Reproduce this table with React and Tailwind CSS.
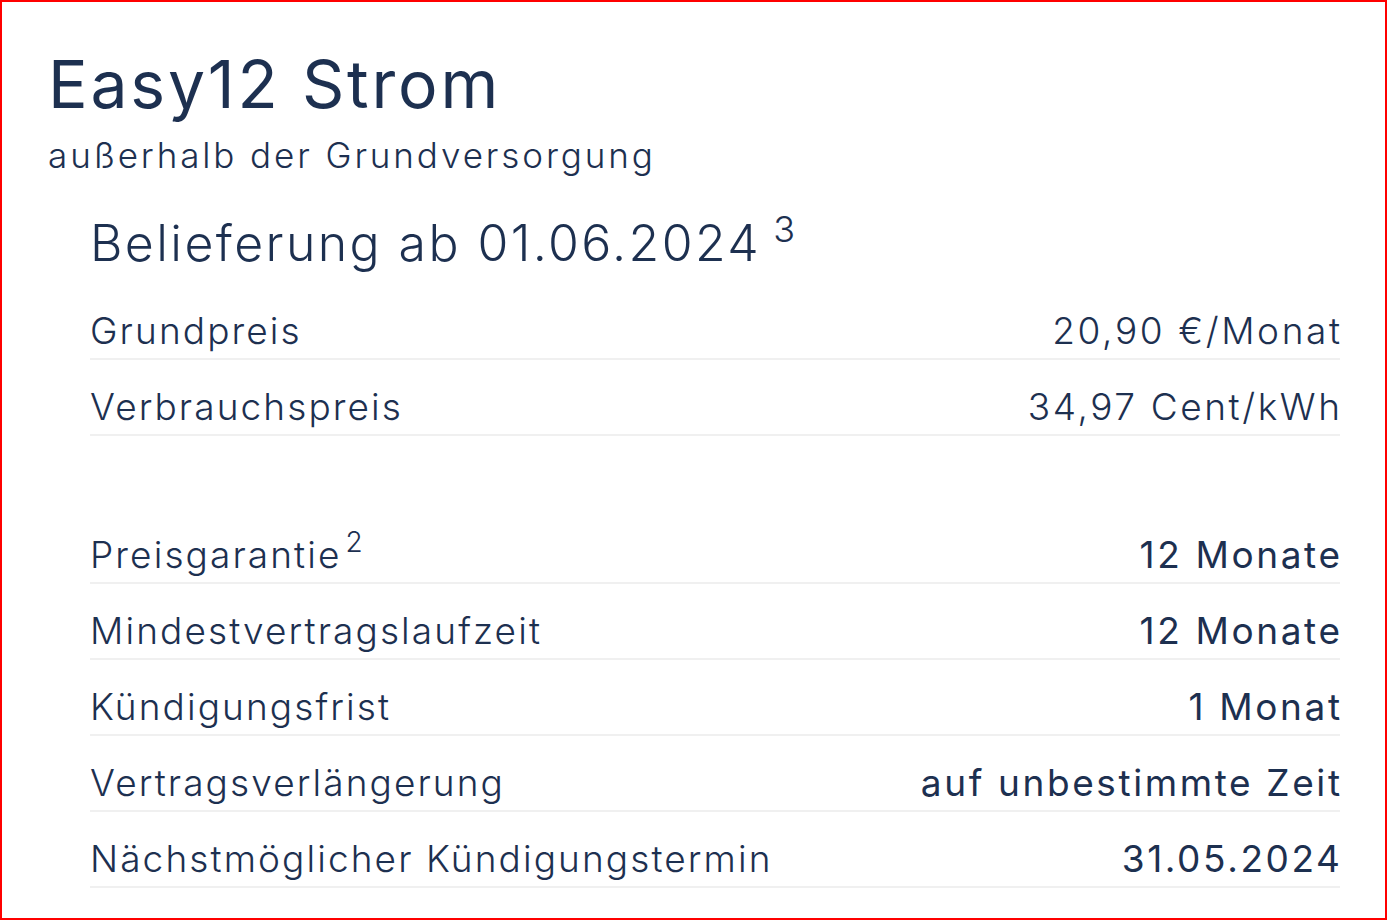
const rowsPrice = [
  { label: 'Grundpreis', value: '20,90 €/Monat' },
  { label: 'Verbrauchspreis', value: '34,97 Cent/kWh' },
]

const rowsContract = [
  { label: 'Preisgarantie', sup: '2', value: '12 Monate' },
  { label: 'Mindestvertragslaufzeit', value: '12 Monate' },
  { label: 'Kündigungsfrist', value: '1 Monat' },
  { label: 'Vertragsverlängerung', value: 'auf unbestimmte Zeit' },
  { label: 'Nächstmöglicher Kündigungstermin', value: '31.05.2024' },
]

function Row({ label, sup, value, strong }) {
  return (
    <div className="flex h-[76px] items-end justify-between border-b-2 border-[#f0f0f0] pb-[9px]">
      <span className="relative text-[37px] font-light leading-none tracking-[2.1px]">
        {label}
        {sup && <span className="relative -top-[16px] ml-[4px] text-[28px]">{sup}</span>}
      </span>
      <span
        className={`-mr-[2.6px] text-[37px] leading-none tracking-[2.6px] ${strong ? 'font-normal' : 'font-light'}`}
      >
        {value}
      </span>
    </div>
  )
}

export default function App() {
  return (
    <div
      className="box-border h-[920px] w-[1387px] border-2 border-[#ff0000] bg-white pl-[46px] pr-[45px] pt-[49px] text-[#1d3050]"
      style={{ fontFamily: 'Inter, "Noto Sans", sans-serif' }}
    >
      <h1 className="text-[66px] font-normal leading-none tracking-[2.8px]">Easy12 Strom</h1>
      <p className="mt-[21px] text-[35px] font-light leading-none tracking-[2.9px]">außerhalb der Grundversorgung</p>

      <div className="ml-[42px] mt-[45px]">
        <h2 className="text-[50px] font-light leading-none tracking-[2.4px]">
          Belieferung ab 01.06.2024
          <span className="relative -top-[19px] ml-[12px] text-[36px]">3</span>
        </h2>

        <div className="mt-[16px]">
          {rowsPrice.map((r) => (
            <Row key={r.label} {...r} />
          ))}
        </div>

        <div className="mt-[72px]">
          {rowsContract.map((r) => (
            <Row key={r.label} {...r} strong />
          ))}
        </div>
      </div>
    </div>
  )
}
